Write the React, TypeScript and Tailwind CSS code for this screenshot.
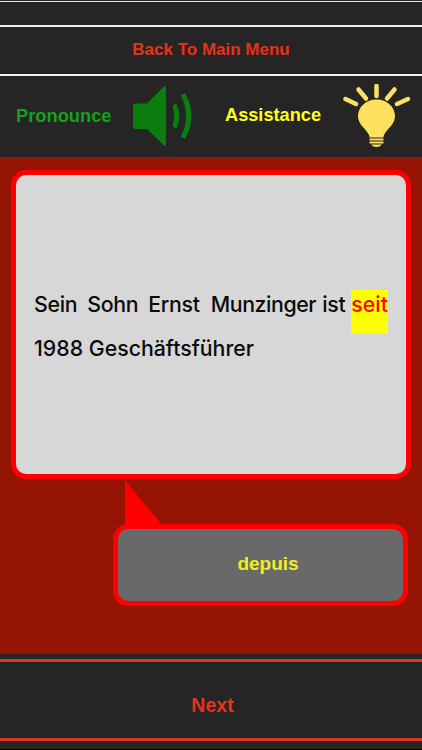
const sans = "font-['Liberation_Sans',Arial,sans-serif]";

function SpeakerIcon() {
  return (
    <svg width="60" height="62" viewBox="0 0 60 62" className="shrink-0">
      <path d="M2 18.5 H14 L31 1.500 Q33 0 33 3 V59 Q33 62 31 60.5 L14 44 H2 Q0 44 0 42 V20.5 Q0 18.500 2 18.5 Z" fill="#0b7d0f" />
      <path d="M39.500 21 L43 18 Q49.500 31 43 44 L39.500 41 Q43 31 39.500 21 Z" fill="#0b7d0f" />
      <path d="M48 10.500 L52 8 Q65 31 52 54 L48 51.500 Q58 31 48 10.500 Z" fill="#0b7d0f" />
    </svg>
  );
}

function BulbIcon() {
  return (
    <svg width="68" height="64" viewBox="0 0 68 64" className="shrink-0">
      <g stroke="#fde05f" strokeWidth="4.500" strokeLinecap="round" fill="none">
        <path d="M2.500 15 L13 20" />
        <path d="M15.500 5.500 L23 14.500" />
        <path d="M33.500 2 V12" />
        <path d="M51.500 5.500 L44 14.500" />
        <path d="M65 15 L54 20" />
      </g>
      <path d="M33.500 15.500 C23 15.500 15 23 15 32 C15 41 23 44 26.500 52 H40.500 C44 44 52 41 52 32 C52 23 44 15.500 33.500 15.500 Z" fill="#fde05f" />
      <g fill="#fde05f">
        <rect x="26.500" y="51.500" width="14" height="2" />
        <rect x="26.500" y="54.500" width="14" height="2" />
        <rect x="26.500" y="57.500" width="14" height="2" />
        <path d="M28 60.500 H39 Q37 63 33.500 63 Q30 63 28 60.500 Z" />
      </g>
    </svg>
  );
}

export default function App() {
  return (
    <div className={`flex h-[750px] w-[422px] flex-col overflow-hidden bg-[#252525] ${sans}`}>
      <div className="mt-px h-[24px] border-t border-[#e8e8e8]" />
      <div className="flex h-[51px] items-center justify-center border-y-2 border-[#f0f0f0] pb-[2px] text-[17px] font-bold text-[#e5321a]">
        Back To Main Menu
      </div>

      <div className="flex h-[81px] items-center pb-[2px] pl-4">
        <span className="w-[117px] text-[18.300px] font-bold text-[#17a01c]">Pronounce</span>
        <SpeakerIcon />
        <span className="ml-[32px] w-[118px] text-[18.200px] font-bold text-[#ffff22]">Assistance</span>
        <BulbIcon />
      </div>

      <main className="flex h-[497px] flex-col bg-[#961403] pl-[11px] pr-[11px] pt-[13px]">
        <div className="flex h-[309px] flex-col justify-center rounded-[15px] border-[5px] border-[#ff0000] bg-[#d7d7d7] pl-[18px] pr-[18px] pt-[3px] font-['Inter',sans-serif] text-[21.300px] font-medium leading-[28px] text-[#0b0b0b]">
          <div className="flex items-start tracking-[-0.3px]">
            <span>Sein</span>
            <span className="ml-[10px]">Sohn</span>
            <span className="ml-[10px]">Ernst</span>
            <span className="ml-[11px] tracking-[-0.4px]">Munzinger</span>
            <span className="ml-[6px]">ist</span>
            <span className="ml-[6px] h-[44px] bg-[#ffff00] tracking-normal text-[#ff0000]">seit</span>
          </div>
          <div>1988 Geschäftsführer</div>
        </div>
        <svg width="37" height="45" viewBox="0 0 37 45" className="ml-[114px] mt-px block shrink-0">
          <path d="M0 0 L37 45 H0 Z" fill="#ff0000" />
        </svg>
        <div className="-mt-px ml-[102px] mr-[3px] flex h-[82px] items-center justify-center rounded-[15px] border-[5px] border-[#ff0000] bg-[#696969] pb-[2px] pl-[15px] text-[19px] font-bold text-[#eeee22]">
          depuis
        </div>
      </main>

      <div className="mt-[5px] flex h-[82px] items-center justify-center border-y-[3px] border-[#e5321a] pl-[3px] pt-[12px] text-[19.500px] font-bold text-[#e5321a]">
        Next
      </div>
      <div className="mt-auto h-px bg-black" />
    </div>
  );
}
